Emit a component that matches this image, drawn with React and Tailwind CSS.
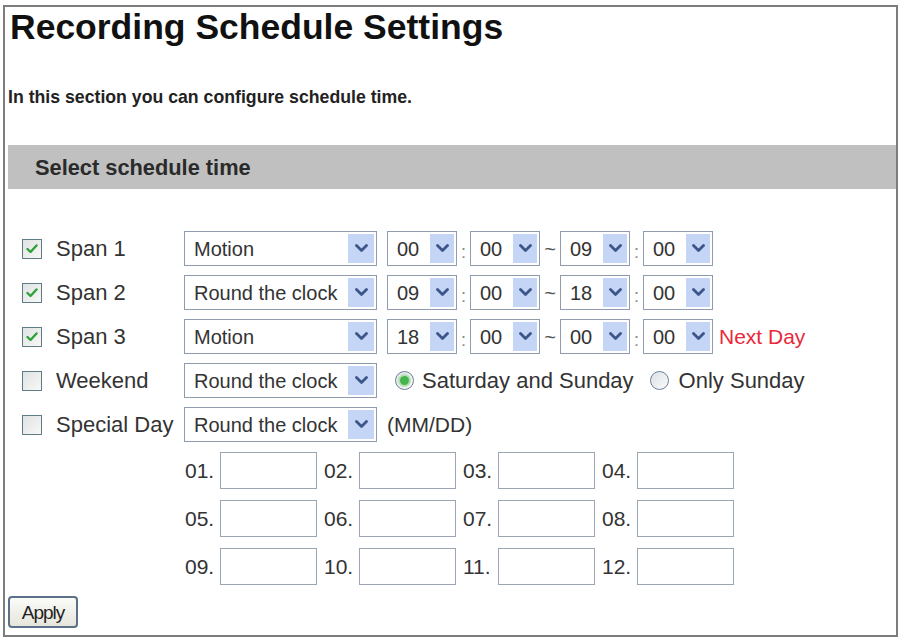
import React from "react";

const FONT = { fontFamily: '"Liberation Sans", Arial, sans-serif' };

function Chevron() {
  return (
    <svg width="13" height="9" viewBox="0 0 13 9">
      <polyline points="1.5,1.5 6.5,6.5 11.5,1.5" fill="none" stroke="#3b5688" strokeWidth="2.8" strokeLinecap="round" strokeLinejoin="round" />
    </svg>
  );
}

function Sel({ w, text, arrowW }) {
  return (
    <div className={`${w} h-[35px] border border-[#8e9cae] bg-white flex items-stretch shrink-0`}>
      <span className="flex-1 flex items-center pl-[9px] text-[20px] text-[#333] leading-none whitespace-nowrap overflow-hidden">{text}</span>
      <span className={`${arrowW} my-[2px] mr-[2px] bg-[#c5d5f6] flex items-center justify-center`}>
        <Chevron />
      </span>
    </div>
  );
}

function Check({ checked }) {
  return (
    <div className="w-[20px] h-[20px] border border-[#5f7b85] bg-gradient-to-br from-[#dfe3e3] to-[#f8f8f6] flex items-center justify-center shrink-0">
      {checked && (
        <svg width="12" height="10" viewBox="0 0 12 10">
          <polyline points="1.5,5 4.5,8 10.5,1.5" fill="none" stroke="#2ea23a" strokeWidth="2.4" strokeLinecap="round" strokeLinejoin="round" />
        </svg>
      )}
    </div>
  );
}

function Radio({ checked }) {
  return (
    <div className="w-[19px] h-[19px] rounded-full border border-[#6c7f98] bg-gradient-to-br from-[#dde2e6] to-[#fafafa] flex items-center justify-center shrink-0">
      {checked && <div className="w-[9px] h-[9px] rounded-full bg-[#47b34c] ring-2 ring-[#b5e0b2]" />}
    </div>
  );
}

function Colon() {
  return <span className="w-[13px] text-center text-[18px] text-[#888] leading-none pt-[6px]">:</span>;
}

function Tilde() {
  return <span className="w-[20px] text-center text-[20px] text-[#555] leading-none">~</span>;
}

function Label({ checked, text }) {
  return (
    <div className="w-[162px] flex items-center shrink-0">
      <Check checked={checked} />
      <span className="ml-[14px] text-[22px] text-[#333] leading-none whitespace-nowrap">{text}</span>
    </div>
  );
}

function SpanRow({ label, mode, h1, m1, h2, m2, next }) {
  return (
    <div className="h-[35px] flex items-center">
      <Label checked text={label} />
      <Sel w="w-[193px]" text={mode} arrowW="w-[26px]" />
      <div className="w-[10px]" />
      <Sel w="w-[70px]" text={h1} arrowW="w-[24px]" />
      <Colon />
      <Sel w="w-[70px]" text={m1} arrowW="w-[24px]" />
      <Tilde />
      <Sel w="w-[70px]" text={h2} arrowW="w-[24px]" />
      <Colon />
      <Sel w="w-[70px]" text={m2} arrowW="w-[24px]" />
      {next && <span className="ml-[6px] text-[21px] text-[#e8283a] leading-none whitespace-nowrap">Next Day</span>}
    </div>
  );
}

function DateCell({ n }) {
  return (
    <div className="flex items-center">
      <span className="w-[35px] text-[21px] text-[#333] leading-none">{n}.</span>
      <div className="w-[97px] h-[37px] border border-[#9ba6b4] bg-white" />
    </div>
  );
}

export default function App() {
  const rows = [
    ["01", "02", "03", "04"],
    ["05", "06", "07", "08"],
    ["09", "10", "11", "12"],
  ];
  return (
    <div className="w-[903px] h-[639px] bg-white overflow-hidden pt-[5px] pl-[3px]" style={FONT}>
      <div className="w-[895px] h-[632px] border-2 border-[#7c7c7c] flex flex-col">
        <h1 className="pl-[5px] h-[40px] leading-[40px] text-[35.5px] font-bold text-[#111] whitespace-nowrap">Recording Schedule Settings</h1>
        <p className="mt-[39px] pl-[3px] h-[22px] leading-[22px] text-[17.7px] font-bold text-[#222] whitespace-nowrap">In this section you can configure schedule time.</p>
        <div className="mt-[37px] ml-[3px] h-[44px] bg-[#c0c0c0] flex items-center pl-[27px] pt-[2px]">
          <span className="text-[21.8px] font-bold text-[#2a2a2a] leading-none">Select schedule time</span>
        </div>
        <div className="mt-[42px] pl-[17px] flex flex-col gap-[9px]">
          <SpanRow label="Span 1" mode="Motion" h1="00" m1="00" h2="09" m2="00" />
          <SpanRow label="Span 2" mode="Round the clock" h1="09" m1="00" h2="18" m2="00" />
          <SpanRow label="Span 3" mode="Motion" h1="18" m1="00" h2="00" m2="00" next />
          <div className="h-[35px] flex items-center">
            <Label checked={false} text="Weekend" />
            <Sel w="w-[193px]" text="Round the clock" arrowW="w-[26px]" />
            <div className="ml-[18px] flex items-center">
              <Radio checked />
              <span className="ml-[8px] text-[22px] text-[#333] leading-none whitespace-nowrap">Saturday and Sunday</span>
            </div>
            <div className="ml-[16px] flex items-center">
              <Radio checked={false} />
              <span className="ml-[10px] text-[22px] text-[#333] leading-none whitespace-nowrap">Only Sunday</span>
            </div>
          </div>
          <div className="h-[35px] flex items-center">
            <Label checked={false} text="Special Day" />
            <Sel w="w-[193px]" text="Round the clock" arrowW="w-[26px]" />
            <span className="ml-[10px] text-[21px] text-[#333] leading-none whitespace-nowrap">(MM/DD)</span>
          </div>
        </div>
        <div className="mt-[10px] pl-[180px] flex flex-col gap-[11px]">
          {rows.map((r, i) => (
            <div key={i} className="flex gap-[7px]">
              {r.map((n) => (
                <DateCell key={n} n={n} />
              ))}
            </div>
          ))}
        </div>
        <div className="mt-[11px] pl-[3px]">
          <button className="w-[70px] h-[32px] rounded-[4px] border-2 border-[#5a7189] bg-gradient-to-b from-[#fbfbf8] to-[#e6e6dd] text-[19px] text-[#222] tracking-[-1px] leading-none">Apply</button>
        </div>
      </div>
    </div>
  );
}
